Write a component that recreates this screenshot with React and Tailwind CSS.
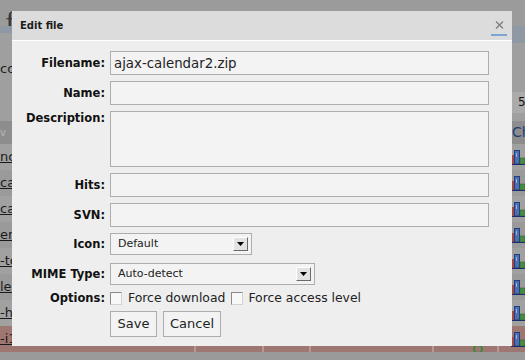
import React from 'react';

const tableRows = [
  { text: 'ncement', tone: 'bg-[#a1a1a1]' },
  { text: 'calendar', tone: 'bg-[#9a9a9a]' },
  { text: 'calendar', tone: 'bg-[#a1a1a1]' },
  { text: 'enhanced', tone: 'bg-[#9a9a9a]' },
  { text: '-tooltip', tone: 'bg-[#a1a1a1]' },
  { text: 'legacy', tone: 'bg-[#9a9a9a]' },
  { text: '-holidays', tone: 'bg-[#a1a1a1]' },
  { text: '-i18n', tone: 'bg-[#9e7672]', last: true },
];

const ChartIcon = () => (
  <svg width="14" height="15" viewBox="0 0 14 15">
    <rect x="0" y="5" width="3" height="9" fill="#a04a4a" />
    <rect x="3.5" y="0.5" width="5" height="13.5" fill="#4d6fae" stroke="#213f82" />
    <rect x="5" y="3" width="1" height="4" fill="#9fb4dc" />
    <rect x="9" y="8" width="5" height="6" fill="#4a8a47" stroke="#2f6a2c" strokeWidth="0.6" />
    <rect x="0" y="14" width="14" height="1" fill="#1d2d6a" />
  </svg>
);

const Arrow = () => (
  <div className="w-[15px] h-[14px] flex items-center justify-center bg-[#e2e2e2] border border-t-white border-l-white border-r-[#6a6a6a] border-b-[#6a6a6a]">
    <svg width="7" height="4" viewBox="0 0 7 4">
      <path d="M0 0 L7 0 L3.5 4 Z" fill="#000" />
    </svg>
  </div>
);

function Field({ label, top = 'mt-[6px]', align = 'items-center', children }) {
  return (
    <div className={`flex ${align} ${top}`}>
      <label className="w-[93px] shrink-0 text-right text-[11.5px] font-bold leading-[14px] text-[#111]">
        {label}
      </label>
      <div className="ml-[5px] flex items-center">{children}</div>
    </div>
  );
}

const TextBox = ({ value = '' }) => (
  <input
    readOnly
    value={value}
    className="w-[379px] h-[24px] border border-[#adadad] bg-[#f3f3f3] pl-[3px] text-[13.33px] text-[#222] outline-none"
  />
);

const Select = ({ value, width }) => (
  <div className={`${width} h-[22px] flex items-center justify-between border border-[#adadad] bg-[#f3f3f3] pl-[7px] pr-[3px] text-[11px] text-[#222]`}>
    <span>{value}</span>
    <Arrow />
  </div>
);

const Check = () => (
  <span className="block w-[12px] h-[13px] shrink-0 bg-[#f8f8f8] border border-t-[#8a8a8a] border-l-[#8a8a8a] border-r-[#d2d2d2] border-b-[#d2d2d2]" />
);

export default function App() {
  return (
    <div className="relative w-[525px] h-[360px] overflow-hidden bg-[#9f9f9f] font-['DejaVu_Sans',sans-serif]">
      {/* page behind the overlay */}
      <div className="flex flex-col">
        <div className="h-[26px] bg-[#9b9b9b] pl-[5px]">
          <h1 className="pt-[4px] font-['Liberation_Serif',serif] text-[32px] leading-[36px] text-[#3a3a3a] whitespace-nowrap">
            files
          </h1>
        </div>
        <div className="h-[17px] flex">
          <div className="flex-1">
            <div className="h-[7px] bg-[#8e99a4]" />
          </div>
          <div className="w-[13px] bg-[#8e99a4]" />
        </div>
        <div className="h-[78px] flex justify-between">
          <div className="pt-[18px] text-[13px] leading-[16px] text-[#1e1e1e] whitespace-nowrap">contains</div>
          <div className="w-[13px] pt-[49px]">
            <div className="h-[21px] w-[20px] -ml-[7px] bg-[#ababab] pl-[13px] text-[12px] leading-[21px] text-[#111]">5</div>
          </div>
        </div>
        <div className="h-[23px] flex justify-between items-center bg-[#8d8d8d]">
          <span className="text-[10px] text-[#b8b8b8] leading-none">v</span>
          <span className="w-[13px] overflow-hidden text-[14px] text-[#1d3f73] whitespace-nowrap">Ch</span>
        </div>
        {tableRows.map((row, i) => (
          <div key={i} className={`h-[26px] flex ${row.tone}`}>
            <div className={`w-[196px] flex items-center ${row.last ? 'border-r-2 border-[#b49896]' : ''}`}>
              <span className="text-[13px] underline text-[#1a1a1a] whitespace-nowrap">{row.text}</span>
            </div>
            <div className={`w-[69px] ${row.last ? 'border-r-2 border-[#b49896]' : ''}`} />
            <div className={`w-[47px] ${row.last ? 'border-r-2 border-[#b49896]' : ''}`} />
            <div className={`w-[123px] ${row.last ? 'border-r-2 border-[#b49896]' : ''}`} />
            <div className={`w-[65px] flex items-end justify-end pr-[14px] ${row.last ? 'border-r-2 border-[#b49896]' : ''}`}>
              {row.last && <span className="w-[10px] h-[10px] mb-[-2px] rounded-full border-2 border-[#3e8a3c]" />}
            </div>
            <div className="flex-1 flex items-center pl-[12px]">
              <ChartIcon />
            </div>
          </div>
        ))}
        <div className="h-[8px] bg-[#9a9a9a]" />
      </div>

      {/* Edit file dialog */}
      <div className="absolute left-[12px] top-[11px] w-[500px] h-[335px] bg-[#eeeeee] flex flex-col text-[#1c1c1c]">
        <div className="h-[30px] shrink-0 flex items-center justify-between bg-[#dcdcdc] border-b border-white pl-[8px] pr-[5px]">
          <span className="text-[10px] font-bold">Edit file</span>
          <button className="h-full flex flex-col items-center pt-[10px]">
            <svg width="9" height="8" viewBox="0 0 9 8">
              <path d="M1 0.5 L8 7.5 M8 0.5 L1 7.5" stroke="#7d7d7d" strokeWidth="1.3" />
            </svg>
            <span className="mt-[5px] w-[16px] h-[2px] bg-[#7ea4d3]" />
          </button>
        </div>

        <div className="flex flex-col pt-[10px]">
          <Field label="Filename:" top="">
            <TextBox value="ajax-calendar2.zip" />
          </Field>
          <Field label="Name:">
            <TextBox />
          </Field>
          <Field label="Description:" align="items-start">
            <textarea
              readOnly
              className="w-[379px] h-[56px] border border-[#adadad] bg-[#f3f3f3] resize-none outline-none"
            />
          </Field>
          <Field label="Hits:">
            <TextBox />
          </Field>
          <Field label="SVN:">
            <TextBox />
          </Field>
          <Field label="Icon:">
            <Select value="Default" width="w-[142px]" />
          </Field>
          <Field label="MIME Type:" top="mt-[8px]">
            <Select value="Auto-detect" width="w-[205px]" />
          </Field>
          <Field label="Options:" top="mt-[4px]">
            <div className="h-[18px] flex items-center text-[12.4px] text-[#222]">
              <Check />
              <span className="ml-[6px]">Force download</span>
              <span className="ml-[6px]"><Check /></span>
              <span className="ml-[5px]">Force access level</span>
            </div>
          </Field>
          <div className="flex mt-[4px] ml-[98px] gap-[6px]">
            <button className="w-[47px] h-[26px] border border-[#adadad] bg-[#f3f3f3] text-[13px] text-[#222]">Save</button>
            <button className="w-[58px] h-[26px] border border-[#adadad] bg-[#f3f3f3] text-[13px] text-[#222]">Cancel</button>
          </div>
        </div>
      </div>
    </div>
  );
}
